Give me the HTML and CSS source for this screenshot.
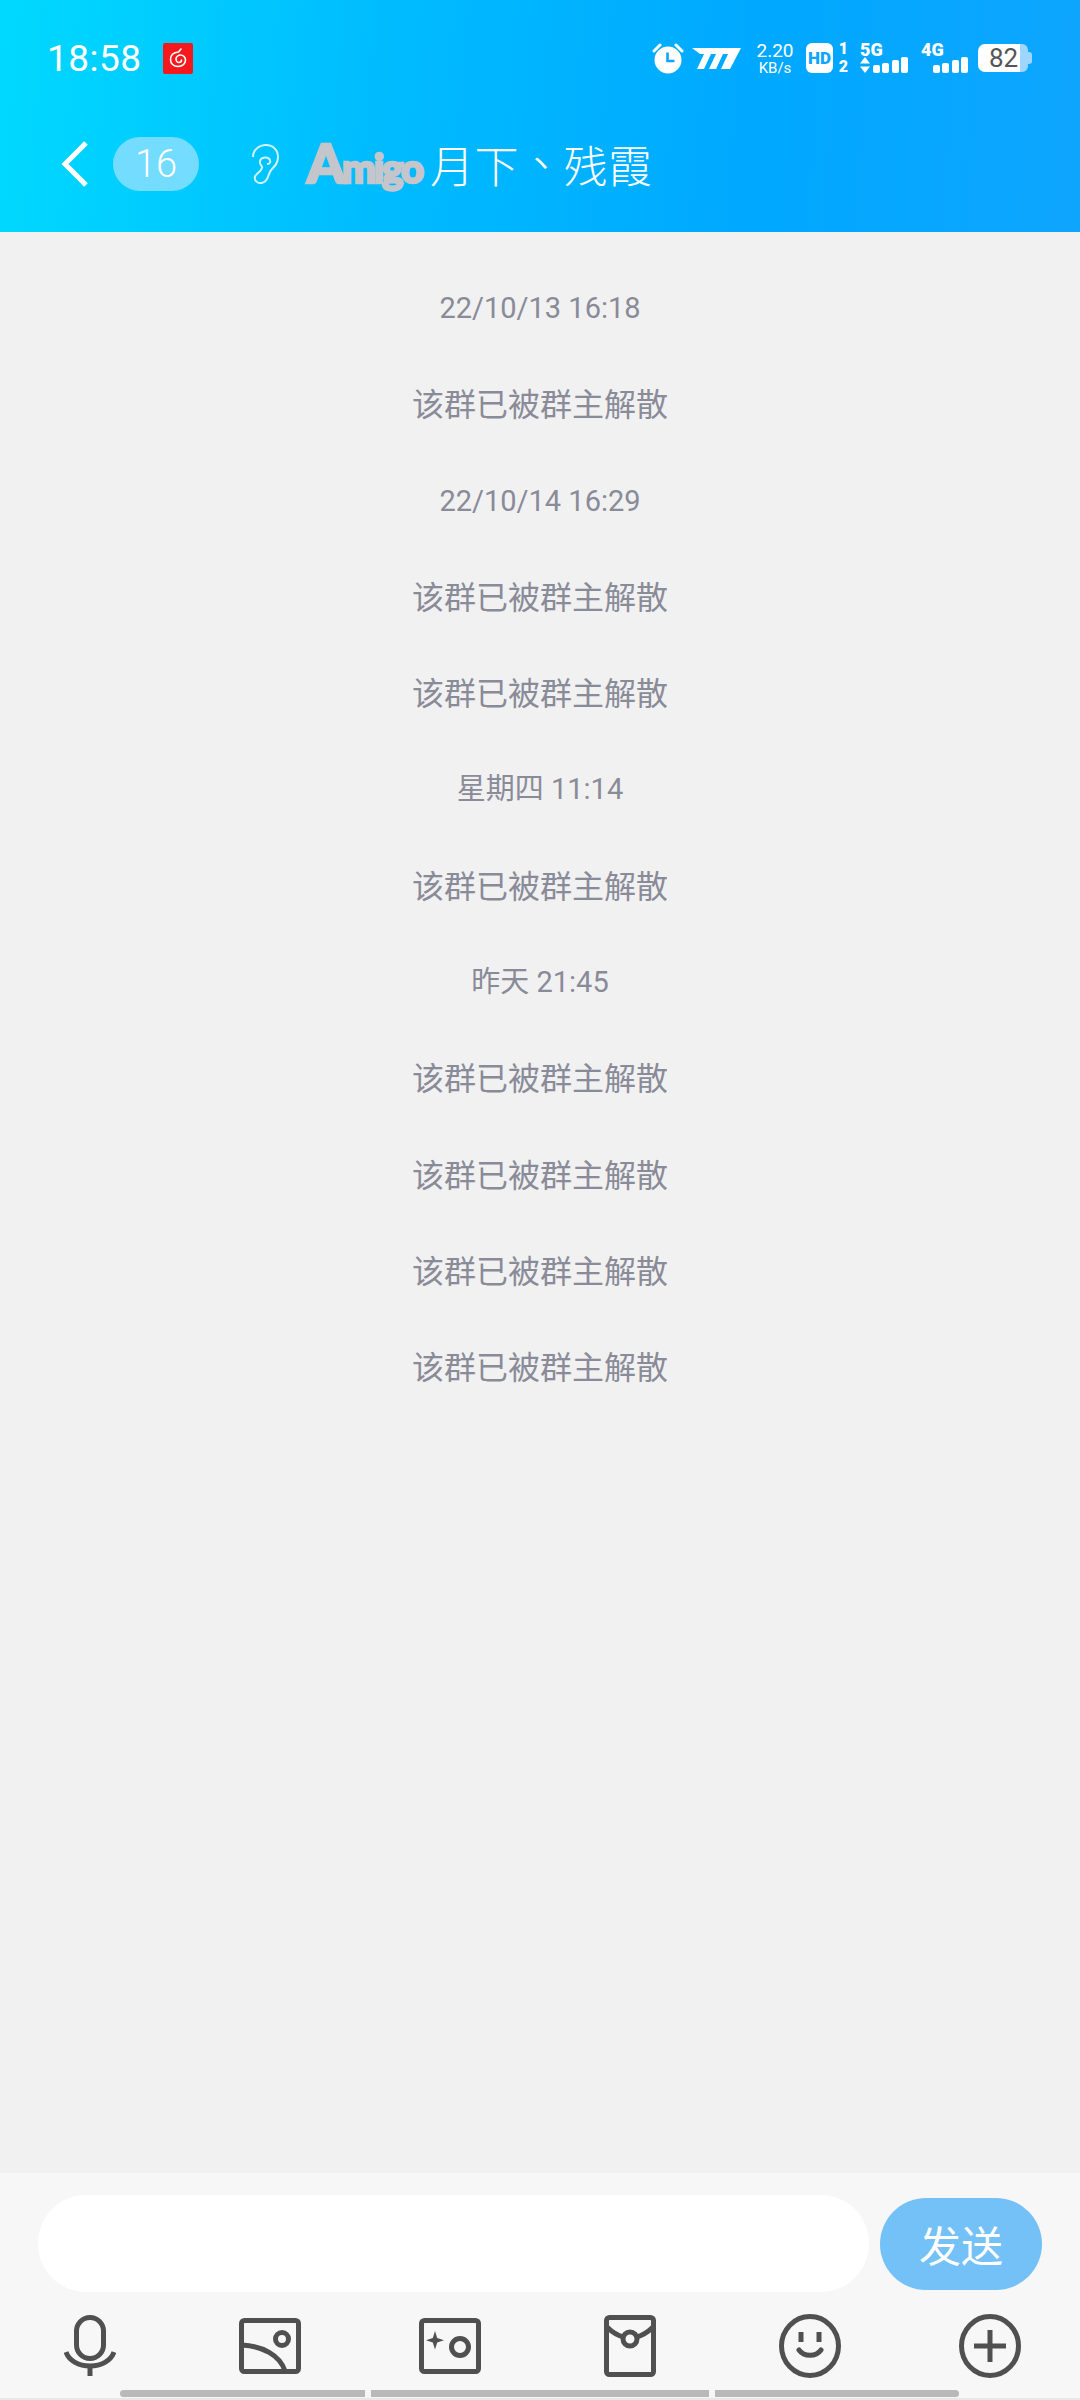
FILE: index.html
```html
<!DOCTYPE html>
<html lang="zh-CN">
<head>
  <meta charset="UTF-8" />
  <title>月下、残霞</title>
  <link rel="stylesheet" href="styles.css">
</head>
<body>
<div class="page">

  <header class="top">
    <div class="status">
      <span class="clock">18:58</span>
      <svg class="app-badge" width="30" height="31" viewBox="0 0 30 31">
        <rect width="30" height="31" rx="2" fill="#f3191c"/>
        <path d="M18 6l-2.500 3c-5 .5-8 3.500-8 7.500 0 4 3 7 7.500 7s7.500-3 7.500-6.500c0-3-2.500-5-5-5s-4.500 2-4.500 4 1.500 3.500 3 3.500 2.500-1 2.500-2.500" fill="none" stroke="#fff" stroke-width="1.600" stroke-linecap="round"/>
      </svg>
      <div class="status-right">
        <svg class="alarm" width="32" height="31" viewBox="0 0 32 31">
          <path d="M2 8l6-6M30 8l-6-6" stroke="#fff" stroke-width="3" stroke-linecap="round"/>
          <circle cx="16" cy="17" r="13.500" fill="#fff"/>
          <path d="M15.500 9.500v8.500h7" fill="none" stroke="#0ea5ff" stroke-width="2.600"/>
        </svg>
        <svg class="speed-logo" width="49" height="21" viewBox="0 0 49 21">
          <path d="M0 0H49L38 21H29L36 6H31L24 21H17L24 6H19L12 21H5L12 6H8Z" fill="#fff"/>
        </svg>
        <div class="net-speed"><span>2.20</span><span class="unit">KB/s</span></div>
        <span class="hd">HD</span>
        <div class="sim-nums"><span>1</span><span>2</span></div>
        <div class="signal">
          <span class="net">5G</span>
          <div class="signal-row">
            <svg width="10" height="16" viewBox="0 0 10 16"><path d="M5 0l5 6.500H0zM5 16L0 9.500h10z" fill="#fff"/></svg>
            <i class="b1"></i><i class="b2"></i><i class="b3"></i><i class="b4"></i>
          </div>
        </div>
        <div class="signal signal-4g">
          <span class="net">4G</span>
          <div class="signal-row">
            <i class="b1"></i><i class="b2"></i><i class="b3"></i><i class="b4"></i>
          </div>
        </div>
        <div class="battery">
          <div class="battery-fill">82</div>
          <div class="battery-rest"></div>
          <div class="battery-nub"></div>
        </div>
      </div>
    </div>

    <div class="nav">
      <svg class="back" width="30" height="48" viewBox="0 0 30 48">
        <path d="M26 3L5 24l21 21" fill="none" stroke="#fff" stroke-width="5"/>
      </svg>
      <span class="unread">16</span>
      <svg class="ear" width="30" height="42" viewBox="0 0 30 42">
        <path d="M3 14C3 7 9 2 16 2c7 0 12 5 12 12 0 6-3 9-6 12-3 3-3 6-5 10-2 4-7 5-10 3-3-2-3-6 0-8 2-2 4-3 5-6 1-2-3-3-2-7 1-4 8-5 10-1 1 3-1 4-3 4" fill="none" stroke="#cff3ff" stroke-width="2"/>
      </svg>
      <span class="amigo"><b>A</b>migo</span>
      <span class="title">月下<span class="mark">、</span>残霞</span>
    </div>
  </header>

  <main class="msgs">
    <p class="time">22/10/13 16:18</p>
    <p class="sys">该群已被群主解散</p>
    <p class="time">22/10/14 16:29</p>
    <p class="sys">该群已被群主解散</p>
    <p class="sys">该群已被群主解散</p>
    <p class="time">星期四 11:14</p>
    <p class="sys">该群已被群主解散</p>
    <p class="time">昨天 21:45</p>
    <p class="sys">该群已被群主解散</p>
    <p class="sys">该群已被群主解散</p>
    <p class="sys">该群已被群主解散</p>
    <p class="sys">该群已被群主解散</p>
  </main>

  <footer class="composer">
    <div class="input-row">
      <div class="input"></div>
      <button class="send">发送</button>
    </div>
    <div class="tools">
      <div class="tool">
        <svg width="52" height="62" viewBox="0 0 52 62" fill="none" stroke="#505050" stroke-width="5">
          <rect x="12.500" y="2.500" width="27" height="41" rx="13.500"/>
          <path d="M2 37c3 9 13 14 24 14s21-5 24-14"/>
          <path d="M26 51v10"/>
        </svg>
      </div>
      <div class="tool">
        <svg width="62" height="56" viewBox="0 0 62 56" fill="none" stroke="#505050" stroke-width="5">
          <rect x="2.500" y="2.500" width="57" height="51" rx="3"/>
          <circle cx="43" cy="21" r="6.500"/>
          <path d="M3 27c20 1 38 10 43 26"/>
        </svg>
      </div>
      <div class="tool">
        <svg width="62" height="56" viewBox="0 0 62 56" fill="none" stroke="#505050" stroke-width="5">
          <rect x="2.500" y="2.500" width="57" height="51" rx="3"/>
          <circle cx="41" cy="29" r="8.500"/>
          <path d="M16 13l2.200 7 6.800 2.200-6.800 2.200-2.200 7-2.200-7-6.800-2.200 6.800-2.200z" fill="#505050" stroke="none"/>
        </svg>
      </div>
      <div class="tool">
        <svg width="52" height="62" viewBox="0 0 52 62" fill="none" stroke="#505050" stroke-width="5">
          <rect x="2.500" y="2.500" width="47" height="57" rx="3"/>
          <path d="M3 12c5 5 12 9 17 10M49 12c-5 5-12 9-17 10"/>
          <circle cx="26" cy="24" r="7"/>
        </svg>
      </div>
      <div class="tool">
        <svg width="62" height="64" viewBox="0 0 62 64" fill="none" stroke="#505050" stroke-width="5">
          <ellipse cx="31" cy="32" rx="28.500" ry="29.500"/>
          <path d="M22 18v10M40 18v10"/>
          <path d="M20 36c5 7 17 7 22 0" stroke-linecap="round"/>
        </svg>
      </div>
      <div class="tool">
        <svg width="62" height="64" viewBox="0 0 62 64" fill="none" stroke="#505050" stroke-width="5">
          <ellipse cx="31" cy="32" rx="28.500" ry="29.500"/>
          <path d="M15 32h32M31 16v32"/>
        </svg>
      </div>
    </div>
    <div class="gesture">
      <span class="pill pill-l"></span>
      <span class="pill pill-m"></span>
      <span class="pill pill-r"></span>
    </div>
  </footer>

</div>
</body>
</html>
```

FILE: styles.css
```css
* {
  box-sizing: border-box;
}

html, body {
  margin: 0;
  padding: 0;
}

body {
  font-family: 'Roboto', 'Noto Sans CJK SC', sans-serif;
  background: #f1f1f1;
}

.page {
  width: 1080px;
  height: 2400px;
  display: flex;
  flex-direction: column;
  overflow: hidden;
}

/* blue top area */
.top {
  height: 232px;
  flex: none;
  background: linear-gradient(95deg, #00d9ff 0%, #00bcff 35%, #00a8ff 70%, #0ea5ff 100%);
  color: white;
}

.status {
  height: 116px;
  display: flex;
  align-items: center;
  padding: 0 48px 0 47px;
}

.clock {
  font-size: 37px;
  letter-spacing: 0.5px;
  margin-right: 21px;
}

.status-right {
  margin-left: auto;
  display: flex;
  align-items: center;
}

.speed-logo {
  margin-left: 8px;
}

.net-speed {
  margin-left: 14px;
  width: 40px;
  display: flex;
  flex-direction: column;
  align-items: center;
  line-height: 1;
  font-size: 19px;
}

.net-speed .unit {
  font-size: 15px;
  margin-top: 1px;
}

.hd {
  margin-left: 11px;
  width: 27px;
  height: 30px;
  background: white;
  color: #0ea5ff;
  border-radius: 6px;
  font-size: 17px;
  font-weight: 900;
  line-height: 30px;
  text-align: center;
}

.sim-nums {
  margin-left: 5px;
  width: 11px;
  display: flex;
  flex-direction: column;
  font-size: 16px;
  font-weight: 900;
  line-height: 18px;
  text-align: center;
}

.signal {
  margin-left: 11px;
  width: 48px;
  height: 30px;
  position: relative;
}

.signal-4g {
  margin-left: 13px;
  width: 47px;
}

.net {
  position: absolute;
  left: 0;
  top: -2px;
  font-size: 18px;
  font-weight: 900;
  line-height: 18px;
}

.signal-row {
  position: absolute;
  right: 0;
  bottom: 0;
  display: flex;
  align-items: flex-end;
  gap: 2.300px;
}

.signal-row svg {
  margin-right: 1px;
}

.signal-row i {
  display: block;
  width: 7px;
  background: white;
  border-radius: 2px;
}

.signal-row .b1 { height: 8px; }
.signal-row .b2 { height: 10px; }
.signal-row .b3 { height: 13px; }
.signal-row .b4 { height: 16px; }

.battery {
  margin-left: 10px;
  width: 54px;
  height: 28px;
  display: flex;
  align-items: center;
}

.battery-fill {
  width: 42px;
  height: 28px;
  background: white;
  border-radius: 7px 0 0 7px;
  color: #555;
  font-size: 26px;
  line-height: 28px;
  text-indent: 11px;
  white-space: nowrap;
}

.battery-rest {
  width: 8px;
  height: 28px;
  background: #9fd6ff;
  border-radius: 0 6px 6px 0;
}

.battery-nub {
  width: 4px;
  height: 12px;
  background: #9fd6ff;
  border-radius: 0 3px 3px 0;
}

.nav {
  height: 116px;
  display: flex;
  align-items: center;
  padding: 0 0 20px 60px;
}

.unread {
  margin-left: 23px;
  width: 86px;
  height: 54px;
  border-radius: 27px;
  background: #73dcff;
  font-size: 38px;
  font-weight: 300;
  line-height: 54px;
  text-align: center;
}

.ear {
  margin-left: 51px;
}

.amigo {
  margin-left: 27px;
  width: 120px;
  font-family: 'Lato', sans-serif;
  font-size: 40px;
  font-weight: 900;
  letter-spacing: -2px;
  color: #c5c6cc;
  -webkit-text-stroke: 2.500px #c5c6cc;
  white-space: nowrap;
}

.amigo b {
  font-size: 54px;
  line-height: 1;
  font-weight: 900;
  letter-spacing: -3px;
}

.title {
  margin-left: 3px;
  font-size: 44px;
  font-family: 'Noto Sans CJK SC', sans-serif;
  font-weight: 300;
  letter-spacing: 0.5px;
}

.title .mark {
  display: inline-block;
  font-family: 'Noto Sans CJK TC', sans-serif;
  transform: translateY(-3px);
}

/* message list */
.msgs {
  flex: 1;
  padding-top: 26px;
  text-align: center;
  color: #8a8b98;
}

.msgs p {
  margin: 0;
  height: 96.300px;
}

.time {
  font-size: 29px;
  line-height: 101px;
}

.sys {
  font-size: 32px;
  font-family: 'Noto Sans CJK SC', sans-serif;
  line-height: 96px;
}

/* bottom input */
.composer {
  height: 227px;
  flex: none;
  background: #f7f7f7;
  border-bottom: 2px solid #e8e8e8;
  padding-top: 22px;
}

.input-row {
  display: flex;
  align-items: center;
  padding-left: 38px;
}

.input {
  width: 831px;
  height: 97px;
  background: white;
  border-radius: 48px;
}

.send {
  margin-left: 11px;
  width: 162px;
  height: 92px;
  border: none;
  border-radius: 46px;
  background: #74c1f7;
  color: white;
  font-family: 'Noto Sans CJK SC', sans-serif;
  font-size: 42px;
  padding: 0;
}

.tools {
  margin-top: 23px;
  display: grid;
  grid-template-columns: repeat(6, 180px);
}

.tool {
  height: 62px;
  display: flex;
  align-items: center;
  justify-content: center;
}

.gesture {
  margin-top: 13px;
  display: flex;
  gap: 6px;
  padding-left: 120px;
}

.pill {
  height: 7px;
  background: #b9b9b9;
}

.pill-l {
  width: 245px;
  border-radius: 4px 0 0 4px;
}

.pill-m {
  width: 338px;
}

.pill-r {
  width: 244px;
  border-radius: 0 4px 4px 0;
}
```
